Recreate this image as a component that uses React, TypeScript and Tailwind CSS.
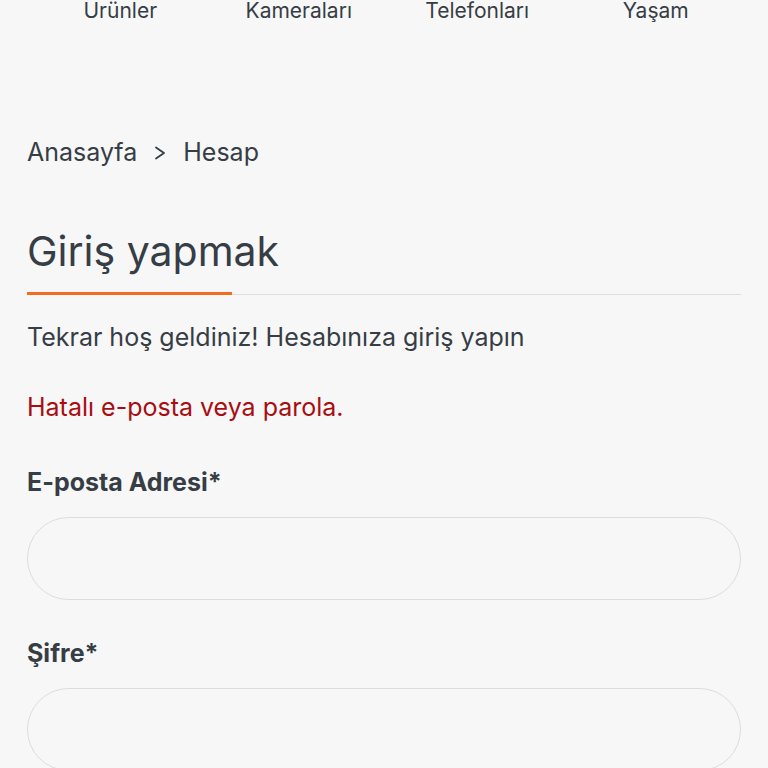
import React from "react";

const navItems = ["Ürünler", "Kameraları", "Telefonları", "Yaşam"];

function Field({ label, type = "text" }: { label: string; type?: string }) {
  return (
    <div className="flex flex-col">
      <label className="text-[25px] leading-[32px] font-bold text-[#363d45]">{label}</label>
      <input
        type={type}
        className="mt-[19px] h-[83px] w-full rounded-full border-[1.5px] border-[#dcdcdc] bg-[#f7f7f7] px-8 text-[22px] outline-none"
      />
    </div>
  );
}

export default function App() {
  return (
    <div
      className="min-h-screen overflow-hidden bg-[#f7f7f7] text-[#363d45]"
      style={{ fontFamily: "Inter, 'Noto Sans', sans-serif" }}
    >
      <nav className="-mt-[1px] grid grid-cols-4 pl-[31px] pr-[23px]">
        {navItems.map((n) => (
          <span key={n} className="text-center text-[21px] leading-[24px] text-[#363d45]">
            {n}
          </span>
        ))}
      </nav>

      <main className="px-[27px]">
        <div className="mt-[113px] flex items-center gap-[17px] text-[25px] leading-[32px]">
          <span>Anasayfa</span>
          <svg width="12" height="14" viewBox="0 0 12 14" fill="none" className="mt-[1px]">
            <path d="M2 1.5 L10 7 L2 12.5" stroke="#363d45" strokeWidth="1.8" strokeLinecap="round" strokeLinejoin="round" />
          </svg>
          <span>Hesap</span>
        </div>

        <h1 className="mt-[61px] text-[41px] leading-[44px] font-normal">Giriş yapmak</h1>
        <div className="relative mt-[19px] h-[3px]">
          <div className="absolute left-0 right-0 top-[1.5px] h-px bg-[#dedede]" />
          <div className="absolute left-0 top-0 h-[3px] w-[205px] bg-[#f36c1f]" />
        </div>

        <p className="mt-[26px] text-[25px] leading-[32px]">Tekrar hoş geldiniz! Hesabınıza giriş yapın</p>
        <p className="mt-[38px] text-[25px] leading-[32px] text-[#a80d12]">Hatalı e-posta veya parola.</p>

        <div className="mt-[43px] flex flex-col gap-[37px]">
          <Field label="E-posta Adresi*" type="email" />
          <Field label="Şifre*" type="password" />
        </div>
      </main>
    </div>
  );
}
